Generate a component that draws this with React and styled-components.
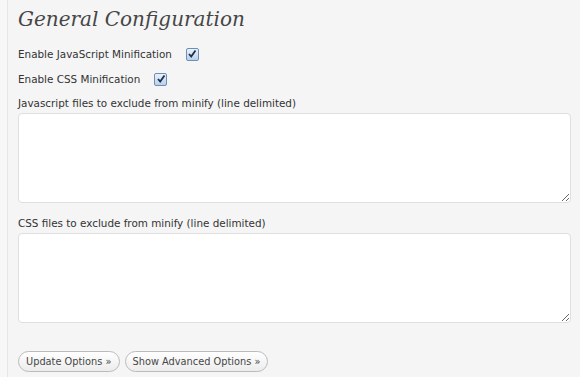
import React from 'react';
import styled, { createGlobalStyle } from 'styled-components';

const GlobalStyle = createGlobalStyle`
  html, body {
    margin: 0;
    padding: 0;
    background: #f5f5f5;
  }
`;

const Page = styled.div`
  display: flex;
  min-height: 377px;
  background: #f5f5f5;
`;

const Gutter = styled.div`
  width: 7px;
  flex-shrink: 0;
  border-right: 1px solid #e6e6e6;
  background: #f7f7f7;
`;

const Wrap = styled.div`
  flex: 1;
  padding: 4px 9px 0 10px;
  font-family: 'DejaVu Sans', Verdana, sans-serif;
  font-size: 10.4px;
  color: #333;
`;

const Title = styled.h2`
  margin: 0 0 12px;
  font-family: 'DejaVu Serif', Georgia, serif;
  font-style: italic;
  font-weight: normal;
  font-size: 20px;
  line-height: 30px;
  color: #464646;
`;

const CheckRow = styled.label`
  display: flex;
  align-items: center;
  gap: 14px;
  height: 16px;
  margin-bottom: 9px;
`;

const Box = styled.span`
  width: 11px;
  height: 11px;
  border: 1px solid #6d8fb7;
  border-radius: 2px;
  background: linear-gradient(#eaf2fb, #b9d0ea);
  display: flex;
  align-items: center;
  justify-content: center;
`;

const FieldLabel = styled.div`
  line-height: 14px;
  margin-bottom: 3px;
`;

const Area = styled.textarea`
  display: block;
  width: 100%;
  box-sizing: border-box;
  height: 90px;
  border: 1px solid #dfdfdf;
  border-radius: 4px;
  background: #fff;
  margin: 0 0 ${p => p.gap}px;
  resize: vertical;
`;

const Buttons = styled.div`
  display: flex;
  gap: 5px;
  margin-top: 28px;
`;

const Button = styled.button`
  font-family: 'DejaVu Sans', Verdana, sans-serif;
  font-size: 9.8px;
  color: #464646;
  height: 21px;
  padding: 0 7px;
  border: 1px solid #bbb;
  border-radius: 11px;
  background: linear-gradient(#fff, #ececec);
`;

const Check = () => (
  <Box>
    <svg width="10" height="10" viewBox="0 0 10 10">
      <path d="M2 5 L4.2 7.5 L8.5 1.5" fill="none" stroke="#1d2f4d" strokeWidth="1.8" />
    </svg>
  </Box>
);

export default function App() {
  return (
    <Page>
      <GlobalStyle />
      <Gutter />
      <Wrap>
        <Title>General Configuration</Title>
        <CheckRow>Enable JavaScript Minification <Check /></CheckRow>
        <CheckRow>Enable CSS Minification <Check /></CheckRow>
        <FieldLabel>Javascript files to exclude from minify (line delimited)</FieldLabel>
        <Area gap={13} />
        <FieldLabel>CSS files to exclude from minify (line delimited)</FieldLabel>
        <Area gap={0} />
        <Buttons>
          <Button>Update Options »</Button>
          <Button>Show Advanced Options »</Button>
        </Buttons>
      </Wrap>
    </Page>
  );
}
